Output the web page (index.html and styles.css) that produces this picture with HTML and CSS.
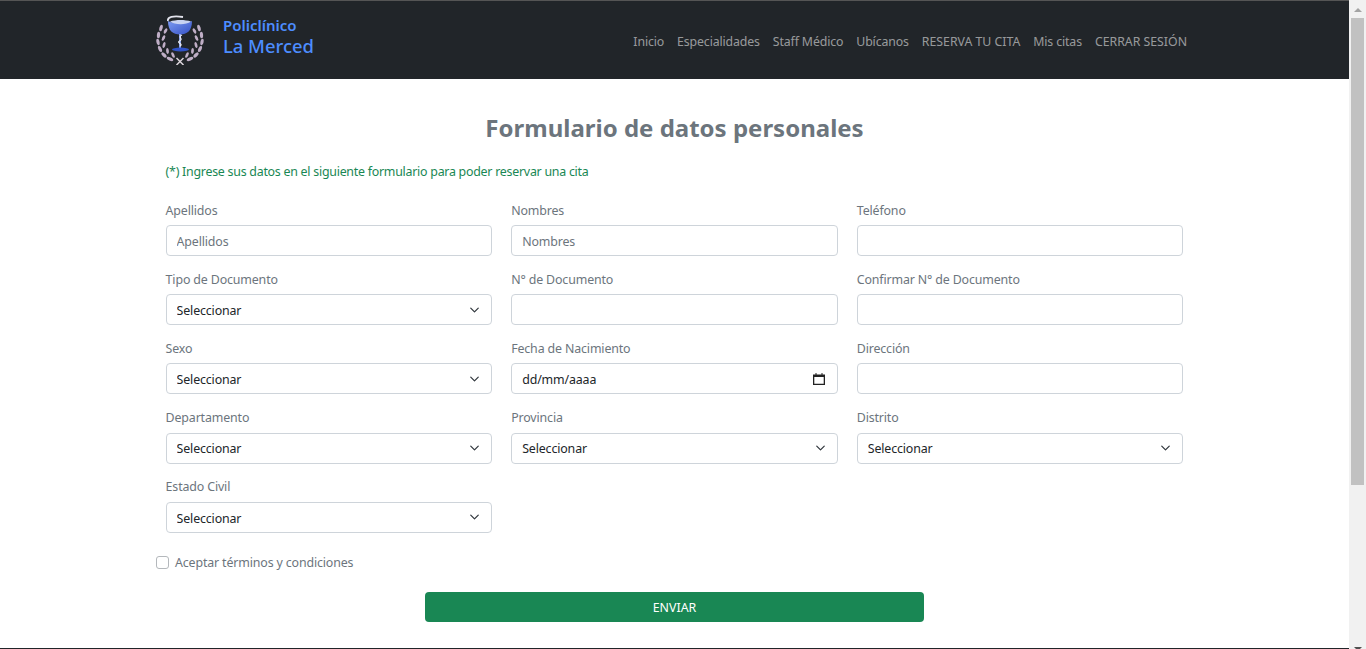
FILE: index.html
```html
<!DOCTYPE html>
<html lang="es">
<head>
<meta charset="utf-8">
<title>Policlínico La Merced</title>
<link rel="stylesheet" href="styles.css">
</head>
<body>
<div class="app">
  <div class="page">
    <header class="navbar">
      <a class="brand" href="#">
        <svg class="logo" viewBox="0 0 50 50" width="50" height="50" aria-hidden="true">
          <defs>
            <linearGradient id="bowl" x1="0" y1="0" x2="1" y2="1">
              <stop offset="0" stop-color="#7c9af2"/>
              <stop offset="1" stop-color="#3450c4"/>
            </linearGradient>
            <g id="wreath" fill="#bfaec6">
              <ellipse cx="6" cy="13" rx="1.600" ry="3.300" transform="rotate(15 6 13)"/>
              <ellipse cx="3.500" cy="20" rx="1.600" ry="3.300" transform="rotate(5 3.500 20)"/>
              <ellipse cx="3" cy="27" rx="1.600" ry="3.300" transform="rotate(-10 3 27)"/>
              <ellipse cx="5" cy="34" rx="1.600" ry="3.300" transform="rotate(-25 5 34)"/>
              <ellipse cx="9" cy="40" rx="1.600" ry="3.300" transform="rotate(-45 9 40)"/>
              <ellipse cx="15" cy="44" rx="1.600" ry="3.500" transform="rotate(-65 15 44)"/>
              <ellipse cx="10.500" cy="16" rx="1.400" ry="3" transform="rotate(30 10.500 16)"/>
              <ellipse cx="8.500" cy="23" rx="1.400" ry="3" transform="rotate(25 8.500 23)"/>
              <ellipse cx="9" cy="30" rx="1.400" ry="3" transform="rotate(15 9 30)"/>
              <ellipse cx="12.500" cy="36" rx="1.400" ry="3" transform="rotate(-5 12.500 36)"/>
              <ellipse cx="18" cy="40" rx="1.400" ry="3" transform="rotate(-25 18 40)"/>
            </g>
          </defs>
          <use href="#wreath"/>
          <use href="#wreath" transform="matrix(-1 0 0 1 50 0)"/>
          <path d="M21.500 50L28.500 43M28.500 50L21.500 43" stroke="#dad4da" stroke-width="1.500" fill="none"/>
          <path d="M13 6C13 16 18 19.500 25 19.500C32 19.500 37 16 37 6C31 9 19 9 13 6Z" fill="url(#bowl)"/>
          <path d="M15 6.500C21 4.500 30 4.500 36 6.500C31 10 20 10 15 6.500Z" fill="#c8d2f2"/>
          <path d="M13 6C12 2 18 0.500 28 2" stroke="#e2e3ec" stroke-width="1.800" fill="none"/>
          <rect x="24" y="19" width="2" height="15" fill="#8ea5ea"/>
          <path d="M27 20C22 22 29 24 24.500 26C21 28 29 29 25 31" stroke="#eeeef4" stroke-width="1.200" fill="none"/>
          <ellipse cx="25.500" cy="34.500" rx="8.500" ry="1.900" fill="#2f52c8"/>
        </svg>
        <span class="brand-text">
          <span class="brand-top">Policlínico</span>
          <span class="brand-bottom">La Merced</span>
        </span>
      </a>
      <nav class="nav">
        <a href="#">Inicio</a>
        <a href="#">Especialidades</a>
        <a href="#">Staff Médico</a>
        <a href="#">Ubícanos</a>
        <a class="caps" href="#">RESERVA TU CITA</a>
        <a href="#">Mis citas</a>
        <a class="caps" href="#">CERRAR SESIÓN</a>
      </nav>
    </header>

    <main class="content">
      <h1 class="title">Formulario de datos personales</h1>
      <p class="note">(*) Ingrese sus datos en el siguiente formulario para poder reservar una cita</p>
      <form class="form">
        <div class="grid">
          <div class="field"><label>Apellidos</label><input class="control" type="text" placeholder="Apellidos"></div>
          <div class="field"><label>Nombres</label><input class="control" type="text" placeholder="Nombres"></div>
          <div class="field"><label>Teléfono</label><input class="control" type="text"></div>

          <div class="field"><label>Tipo de Documento</label><select class="control select"><option>Seleccionar</option></select></div>
          <div class="field"><label>N° de Documento</label><input class="control" type="text"></div>
          <div class="field"><label>Confirmar N° de Documento</label><input class="control" type="text"></div>

          <div class="field"><label>Sexo</label><select class="control select"><option>Seleccionar</option></select></div>
          <div class="field"><label>Fecha de Nacimiento</label><input class="control date" type="text" value="dd/mm/aaaa"></div>
          <div class="field"><label>Dirección</label><input class="control" type="text"></div>

          <div class="field"><label>Departamento</label><select class="control select"><option>Seleccionar</option></select></div>
          <div class="field"><label>Provincia</label><select class="control select"><option>Seleccionar</option></select></div>
          <div class="field"><label>Distrito</label><select class="control select"><option>Seleccionar</option></select></div>

          <div class="field"><label>Estado Civil</label><select class="control select"><option>Seleccionar</option></select></div>
        </div>
        <label class="check"><input type="checkbox"><span>Aceptar términos y condiciones</span></label>
        <button class="submit" type="button">ENVIAR</button>
      </form>
    </main>
    <footer class="footer"></footer>
  </div>
  <aside class="scrollbar" aria-hidden="true">
    <span class="arrow-up"></span>
    <span class="thumb"></span>
    <span class="arrow-down"></span>
  </aside>
</div>
</body>
</html>
```

FILE: styles.css
```css
* { box-sizing: border-box; }
html, body { margin: 0; height: 100%; overflow: hidden; }
body {
  font-family: "Noto Sans", "Open Sans", "Liberation Sans", sans-serif;
  font-size: 12.4px;
  line-height: 21px;
  color: #6c757d;
  background: #fff;
}
.app { display: flex; height: 649px; }
.page { flex: 1; min-width: 0; display: flex; flex-direction: column; }

.navbar {
  height: 79px;
  flex: none;
  background: #212529;
  border-top: 1px solid #555;
  display: flex;
  align-items: center;
  justify-content: space-between;
  padding: 0 162px 0 155px;
}
.brand { display: flex; align-items: center; gap: 18px; text-decoration: none; color: #4d8dff; margin-top: -9px; }
.logo { display: block; margin-top: 9px; }
.brand-text { display: flex; flex-direction: column; }
.brand-top { font-size: 15px; font-weight: 600; line-height: 20px; }
.brand-bottom { font-size: 18.4px; font-weight: 500; line-height: 22px; }
.nav { display: flex; gap: 13px; margin-top: 3px; }
.nav a { color: rgba(255,255,255,.55); text-decoration: none; font-size: 12.3px; letter-spacing: -0.12px; }
.nav a.caps { letter-spacing: 0; }

.content { flex: 1; display: flex; flex-direction: column; padding: 34px 0 0 165.6px; }
.title {
  margin: 0 165.6px 0 0;
  text-align: center;
  font-size: 24px;
  line-height: 30px;
  font-weight: 700;
  color: #6c757d;
}
.note { margin: 18px 0 0; color: #198754; letter-spacing: -0.25px; }
.form { margin-top: 17.5px; }
.grid { display: grid; grid-template-columns: repeat(3, 326.4px); column-gap: 19.2px; row-gap: 12.7px; }
.field { display: flex; flex-direction: column; gap: 4.5px; }
.field label { display: block; letter-spacing: -0.14px; }
.control {
  display: block;
  width: 100%;
  height: 31px;
  padding: 4.9px 10px 3.1px;
  border: 1px solid #ced4da;
  border-radius: 4px;
  background-color: #fff;
  font: inherit;
  letter-spacing: -0.14px;
  color: #212529;
  outline: none;
  appearance: none;
}
.control::placeholder { color: #6c757d; opacity: 1; }
.select {
  background-image: url("data:image/svg+xml,%3csvg xmlns='http://www.w3.org/2000/svg' viewBox='0 0 16 16'%3e%3cpath fill='none' stroke='%23343a40' stroke-linecap='round' stroke-linejoin='round' stroke-width='2' d='M2 5l6 6 6-6'/%3e%3c/svg%3e");
  background-repeat: no-repeat;
  background-position: right 11px center;
  background-size: 11px 10px;
}
.date {
  background-image: url("data:image/svg+xml,%3csvg xmlns='http://www.w3.org/2000/svg' viewBox='0 0 12 12'%3e%3cpath fill='%23222' d='M2.500 0h1v1.500h5V0h1v1.500H12V12H0V1.500h2.500zM1.300 4v6.700h9.400V4z'/%3e%3c/svg%3e");
  background-repeat: no-repeat;
  background-position: right 12px center;
  background-size: 12px 12px;
}
.check { display: flex; align-items: center; gap: 6px; margin: 19.1px 0 0 -9.6px; letter-spacing: -0.14px; }
.check input {
  appearance: none;
  width: 13px;
  height: 13px;
  margin: 0;
  border: 1px solid #b4b8bc;
  border-radius: 3px;
  background: #fff;
}
.submit {
  display: block;
  width: 499px;
  height: 30px;
  margin: 19px 0 0 259.4px;
  padding: 2px 0 0;
  border: 0;
  border-radius: 4px;
  background: #198754;
  color: #fff;
  font: inherit;
}
.footer { height: 1px; flex: none; background: #212529; }

.scrollbar {
  width: 17px;
  flex: none;
  background: #f1f1f1;
  display: flex;
  flex-direction: column;
  align-items: center;
  position: relative;
  padding-top: 18px;
}
.thumb { width: 13px; height: 467px; background: #c1c1c1; }
.arrow-up, .arrow-down { position: absolute; width: 0; height: 0; border-left: 4px solid transparent; border-right: 4px solid transparent; }
.arrow-up { top: 8px; border-bottom: 4px solid #a3a3a3; }
.arrow-down { top: 647px; border-top: 4px solid #505050; }
```
